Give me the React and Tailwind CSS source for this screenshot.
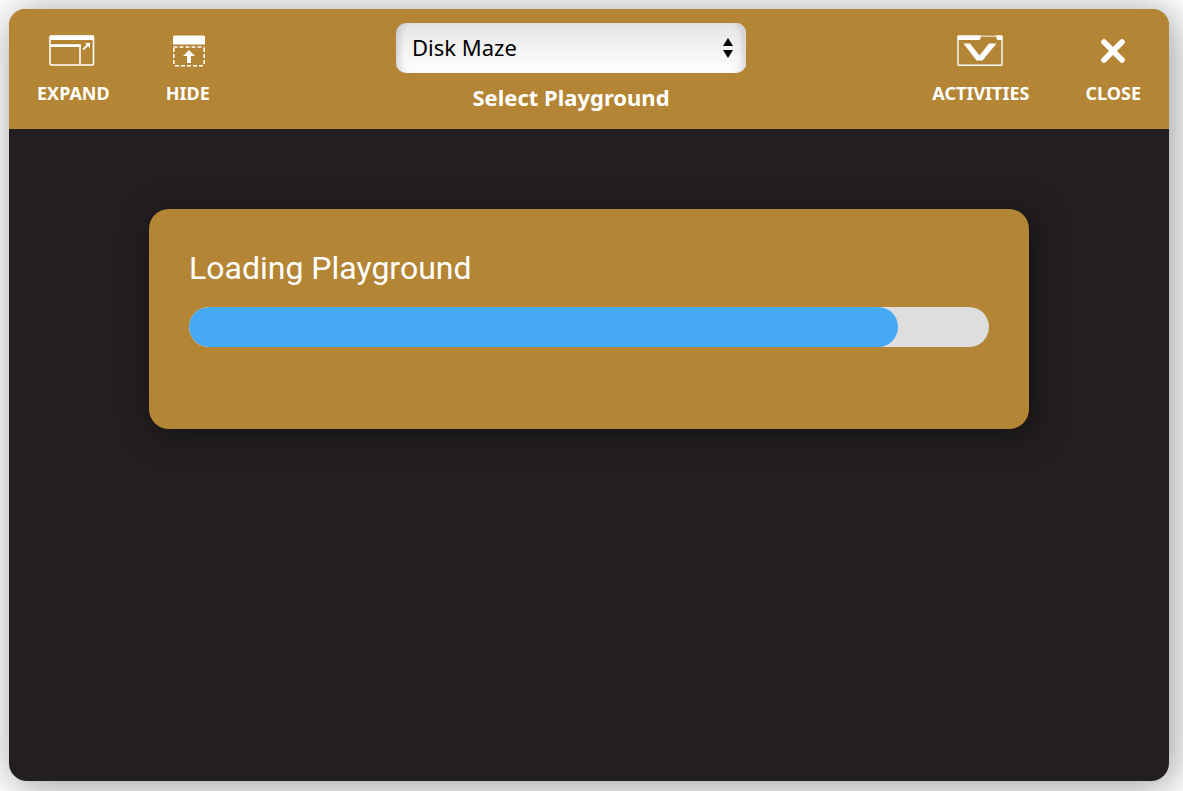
import { useState } from 'react'

const PLAYGROUNDS = ['Disk Maze', 'Grid Map', 'Wall Maze', 'Art Canvas', 'Castle Crasher']

export default function App() {
  const [playground, setPlayground] = useState(PLAYGROUNDS[0])
  const progress = 88.6

  return (
    <div className="min-h-screen flex bg-white pt-[9px] pr-[14px] pb-[10px] pl-[9px] overflow-hidden font-['Noto_Sans',sans-serif]">
      <div className="flex-1 flex flex-col rounded-[18px] bg-[#231f20] shadow-[4px_4px_40px_rgba(0,0,0,0.42)]">
        {/* Toolbar */}
        <header className="h-[120px] flex justify-between rounded-t-[16px] bg-[#b48534] text-white">
          <div className="flex">
            <ToolButton label="EXPAND" icon={<ExpandIcon />} />
            <ToolButton label="HIDE" icon={<HideIcon />} />
          </div>

          <div className="flex flex-col items-center pt-[14px]">
            <div className="relative">
              <select
                id="playground"
                value={playground}
                onChange={(e) => setPlayground(e.target.value)}
                className="block w-[350px] h-[50px] appearance-none rounded-[10px] pl-4 pr-10 pb-0.5 text-[22px] text-black bg-linear-to-b from-[#e5e5e5] to-white shadow-[inset_8px_0_8px_-6px_rgba(0,0,0,0.2),inset_-8px_0_8px_-6px_rgba(0,0,0,0.2),inset_-1px_0_0_#fff]">
                {PLAYGROUNDS.map((p) => <option key={p}>{p}</option>)}
              </select>
              <svg className="absolute right-3 top-[15px] pointer-events-none" width="12" height="20" viewBox="0 0 12 20" aria-hidden="true">
                <path d="M6 0l5 8H1ZM1 12h10l-5 8Z" fill="#000" />
              </svg>
            </div>
            <label htmlFor="playground" className="mt-2 text-[22px] leading-8 font-bold">Select Playground</label>
          </div>

          <div className="flex">
            <ToolButton label="ACTIVITIES" icon={<ActivitiesIcon />} />
            <ToolButton label="CLOSE" icon={<CloseIcon />} />
          </div>
        </header>

        {/* Loading card */}
        <main className="flex-1 px-10 pt-20">
          <section className="max-w-[880px] h-[220px] mx-auto p-10 rounded-[20px] bg-[#b48534] shadow-[5px_5px_30px_rgba(0,0,0,0.5)]">
            <h1 id="loading-title" className="font-['Roboto',sans-serif] text-[32px] leading-[38px] text-white">Loading Playground</h1>
            <div
              role="progressbar"
              aria-labelledby="loading-title"
              aria-valuenow={progress}
              className="mt-5 h-10 rounded-full bg-[#dedede] overflow-hidden">
              <div className="h-full rounded-full bg-[#45a9f3]" style={{ width: `${progress}%` }} />
            </div>
          </section>
        </main>
      </div>
    </div>
  )
}

function ToolButton({ label, icon }) {
  return (
    <button type="button" className="flex flex-col items-center px-7 pt-[26px] cursor-pointer">
      {icon}
      <span className="mt-3.5 text-[18px] leading-6 font-bold">{label}</span>
    </button>
  )
}

function ExpandIcon() {
  return (
    <svg width="48" height="32" viewBox="0 0 48 32" fill="none" stroke="#fff" aria-hidden="true">
      <rect x="1" y="1" width="43.5" height="29" rx="1" strokeWidth="1.6" />
      <path d="M1 .5h44V5H1Z" fill="#fff" stroke="none" />
      <path d="M31 10v20" strokeWidth="1.6" />
      <path d="M1 9.2h30.8V12H1Z" fill="#fff" stroke="none" />
      <path d="M34.2 14.5l5-5" strokeWidth="1.8" />
      <path d="M36 8h5v5Z" fill="#fff" stroke="none" />
    </svg>
  )
}

function HideIcon() {
  return (
    <svg width="34" height="32" viewBox="0 0 34 32" fill="none" aria-hidden="true">
      <path d="M2 9.5V2A1.5 1.5 0 0 1 3.5.5h29A1.5 1.5 0 0 1 34 2v7.5Z" fill="#fff" />
      <path d="M2.5 12h31M4 30.8h29" stroke="#fff" strokeWidth="1.6" strokeDasharray="4 2" />
      <path d="M2.8 13v18M33.2 13v18" stroke="#fff" strokeWidth="1.6" strokeDasharray="4 2" />
      <path d="M18 15l6 6h-4v7h-4v-7h-4Z" fill="#fff" />
    </svg>
  )
}

function ActivitiesIcon() {
  return (
    <svg width="48" height="32" viewBox="0 0 48 32" fill="none" aria-hidden="true">
      <rect x="1" y="1.2" width="44" height="29" rx="1" stroke="#fff" strokeWidth="1.4" />
      <path d="M23.5 0h16v2h-16Z" fill="#b48534" fillOpacity=".4" />
      <path d="M.5.5h23V4l-1.500 1H.5ZM39.500.5h6V5H41l-1.500-1Z" fill="#fff" />
      <path d="M6.500 8.500H13l9.500 12L32 8.500h7.500l-14 17h-6Z" fill="#fff" />
    </svg>
  )
}

function CloseIcon() {
  return (
    <svg width="32" height="32" viewBox="0 0 32 32" fill="none" aria-hidden="true">
      <path d="M7 7l18 18M25 7L7 25" stroke="#fff" strokeWidth="5.6" strokeLinecap="round" />
    </svg>
  )
}
